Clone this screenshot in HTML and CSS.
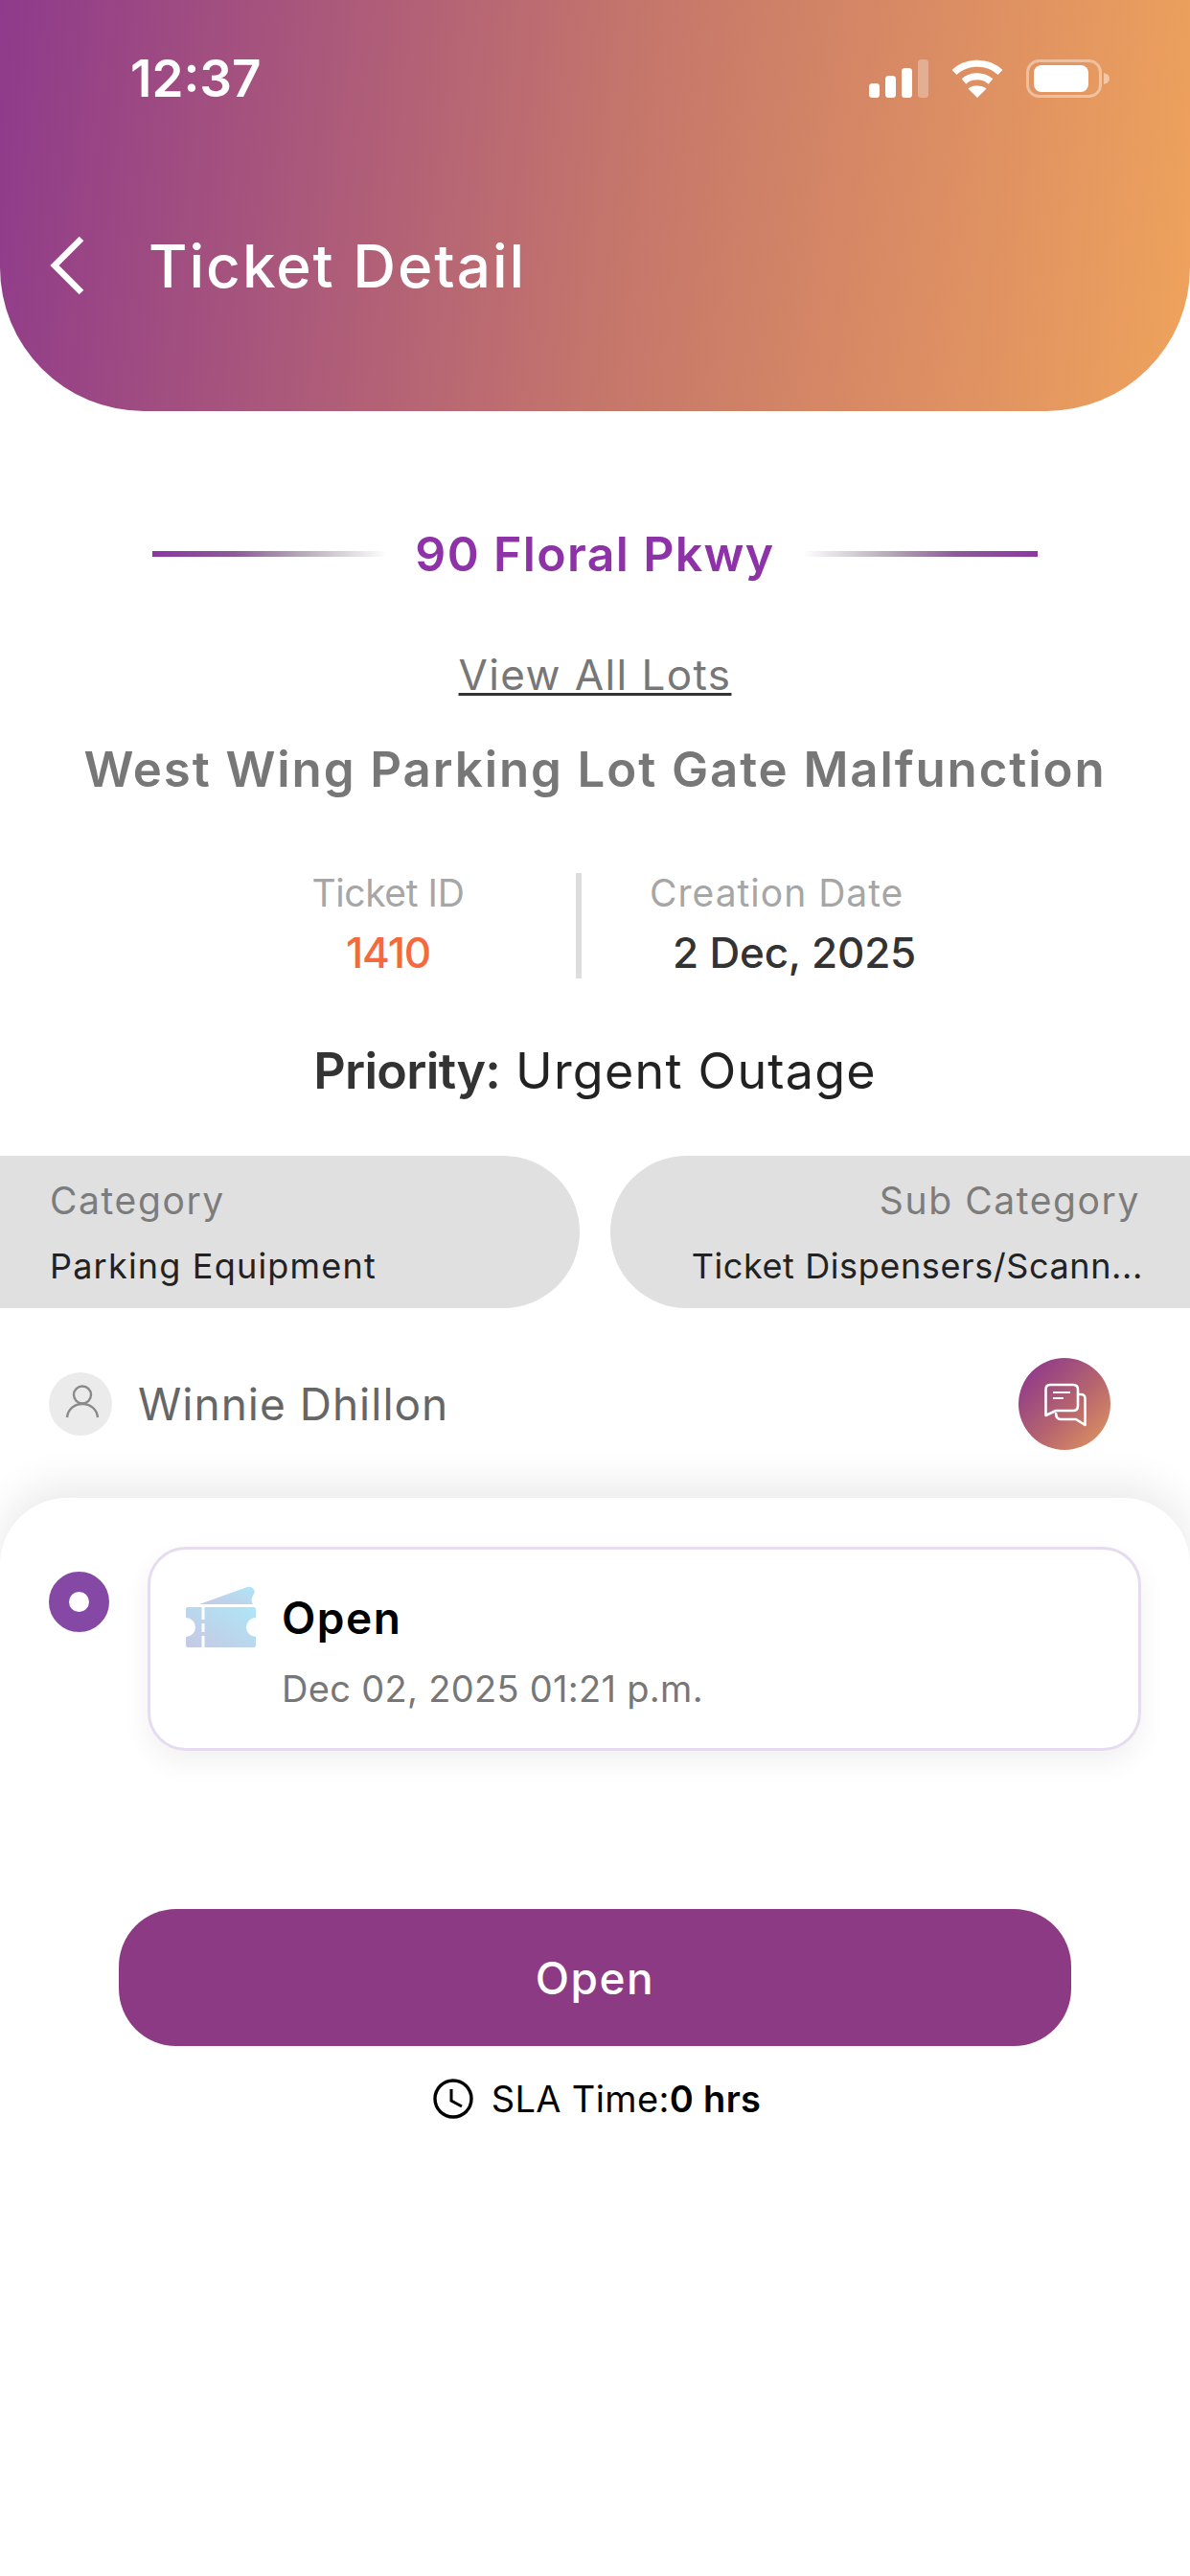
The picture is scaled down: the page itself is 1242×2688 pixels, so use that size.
FILE: index.html
```html
<!DOCTYPE html>
<html lang="en">
<head>
    <meta charset="UTF-8">
    <meta name="viewport" content="width=device-width, initial-scale=1.0">
    <title>Ticket Detail</title>
    <link rel="stylesheet" href="styles.css">
</head>
<body>
    <div class="page">
        <header class="top-header">
            <div class="status-bar">
                <span class="status-time">12:37</span>
                <div class="status-icons">
                    <svg class="icon-signal" width="62" height="40" viewBox="0 0 62 40" fill="#fff">
                        <rect x="0" y="25" width="11" height="15" rx="3.5"/>
                        <rect x="17" y="17" width="11" height="23" rx="3.5"/>
                        <rect x="34" y="9" width="11" height="31" rx="3.5"/>
                        <rect x="51" y="0" width="11" height="40" rx="3.5" opacity="0.3"/>
                    </svg>
                    <svg class="icon-wifi" width="54" height="40" viewBox="0 0 54 40" fill="none" stroke="#fff" stroke-width="7">
                        <path d="M3 13.5 C16 1 38 1 51 13.5"/>
                        <path d="M13 23 C21 16 33 16 41 23"/>
                        <path d="M27 40 L17.5 30.5 C22 26.5 32 26.5 36.5 30.5 Z" fill="#fff" stroke="none"/>
                    </svg>
                    <svg class="icon-battery" width="88" height="40" viewBox="0 0 88 40" fill="none">
                        <rect x="1.5" y="1.5" width="76" height="37" rx="12" stroke="#fff" stroke-width="3" opacity="0.4"/>
                        <rect x="8" y="6" width="57" height="28" rx="8" fill="#fff"/>
                        <path d="M81 14 C85 15 87 17 87 20 C87 23 85 25 81 26 Z" fill="#fff" opacity="0.45"/>
                    </svg>
                </div>
            </div>
            <div class="title-row">
                <svg class="back-arrow" width="36" height="62" viewBox="0 0 36 62" fill="none" stroke="#fff" stroke-width="6.5">
                    <path d="M33 3 L5 31 L33 59"/>
                </svg>
                <h1>Ticket Detail</h1>
            </div>
        </header>

        <div class="site-row">
            <span class="site-line"></span>
            <span class="site-name">90 Floral Pkwy</span>
            <span class="site-line site-line-right"></span>
        </div>
        <a class="view-lots" href="#">View All Lots</a>
        <h2 class="ticket-title">West Wing Parking Lot Gate Malfunction</h2>

        <div class="meta-row">
            <div class="meta-id">
                <div class="meta-label">Ticket ID</div>
                <div class="meta-value id-value">1410</div>
            </div>
            <span class="meta-sep"></span>
            <div class="meta-date">
                <div class="meta-label date-label">Creation Date</div>
                <div class="meta-value date-value">2 Dec, 2025</div>
            </div>
        </div>

        <div class="priority"><strong>Priority:</strong> Urgent Outage</div>

        <div class="pills">
            <div class="pill pill-left">
                <div class="pill-label">Category</div>
                <div class="pill-value">Parking Equipment</div>
            </div>
            <div class="pill pill-right">
                <div class="pill-label">Sub Category</div>
                <div class="pill-value">Ticket Dispensers/Scann...</div>
            </div>
        </div>

        <div class="owner-row">
            <div class="owner">
                <span class="avatar">
                    <svg width="66" height="66" viewBox="0 0 66 66" fill="none" stroke="#8a8a8a" stroke-width="2.4">
                        <circle cx="35" cy="23.5" r="9"/>
                        <path d="M19 47 C20 38 27 33 35 33 C43 33 50 38 51 47"/>
                    </svg>
                </span>
                <span class="owner-name">Winnie Dhillon</span>
            </div>
            <span class="chat-btn">
                <svg width="96" height="96" viewBox="0 0 96 96" fill="none" stroke="#fff" stroke-width="2.6" stroke-linejoin="round">
                    <path d="M33 28 H57 Q62 28 62 33 V50 Q62 55 57 55 H39 L28.500 60 V33 Q28.500 28 33 28 Z"/>
                    <path d="M36 36 H54 M36 42 H47" stroke-width="2.2"/>
                    <path d="M63 38 H65 Q69.500 38 69.500 42.500 V70 L60 64 H44 Q39 64 39 57"/>
                </svg>
            </span>
        </div>

        <section class="sheet">
            <div class="timeline-item">
                <span class="timeline-dot"></span>
                <div class="status-card">
                    <svg class="ticket-icon" width="73" height="64" viewBox="0 0 73 64">
                        <defs>
                            <linearGradient id="ticketGrad" x1="0" y1="1" x2="1" y2="0">
                                <stop offset="0" stop-color="#c6c8e3"/>
                                <stop offset="1" stop-color="#aee6f7"/>
                            </linearGradient>
                        </defs>
                        <path fill="url(#ticketGrad)" d="M14 19 L64 1 Q70 0 72 6 L69 12 Q68 16 70 19 Z"/>
                        <path fill="url(#ticketGrad)" d="M2 22 H71 Q73 22 73 24 V33 A10 10 0 0 0 73 53 V62 Q73 64 71 64 H2 Q0 64 0 62 V53 A10 10 0 0 0 0 33 V24 Q0 22 2 22 Z"/>
                        <path stroke="#fff" stroke-width="3" d="M18 22 V35 M18 39 V48 M18 52 V64"/>
                    </svg>
                    <div class="card-text">
                        <div class="card-title">Open</div>
                        <div class="card-date">Dec 02, 2025 01:21 p.m.</div>
                    </div>
                </div>
            </div>

            <button class="status-btn">Open</button>

            <div class="sla-row">
                <svg width="42" height="42" viewBox="0 0 42 42" fill="none" stroke="#000" stroke-width="3.4">
                    <circle cx="21" cy="21" r="19"/>
                    <path d="M19 11 V23 L30 29" stroke-width="3"/>
                </svg>
                <span>SLA Time:<strong>0 hrs</strong></span>
            </div>
        </section>
    </div>
</body>
</html>
```

FILE: styles.css
```css
* {
    box-sizing: border-box;
}
html, body {
    margin: 0;
    padding: 0;
}
body {
    font-family: Inter, "Noto Sans", sans-serif;
    background-color: #fff;
}
.page {
    width: 1242px;
    height: 2688px;
    overflow: hidden;
    display: flex;
    flex-direction: column;
}

/* Header */
.top-header {
    height: 429px;
    padding-top: 42px;
    background: linear-gradient(97deg, #8f3a8b 0%, #c5766b 52%, #efa35c 100%);
    border-radius: 0 0 150px 150px;
    color: #fff;
}
.status-bar {
    height: 80px;
    padding: 0 83px 0 136px;
    display: flex;
    align-items: center;
    justify-content: space-between;
}
.status-time {
    font-size: 53px;
    font-weight: 600;
}
.status-icons {
    display: flex;
    align-items: center;
    gap: 24px;
}
.title-row {
    height: 80px;
    margin-top: 115px;
    padding-left: 52px;
    display: flex;
    align-items: center;
    gap: 67px;
}
.title-row h1 {
    margin: 0;
    font-size: 62px;
    font-weight: 500;
    letter-spacing: 2px;
}

/* Site name with fading lines */
.site-row {
    height: 70px;
    margin-top: 114px;
    padding: 0 159px;
    display: flex;
    align-items: center;
    justify-content: space-between;
}
.site-line {
    width: 245px;
    height: 6px;
    background: linear-gradient(90deg, #8d37a3, #8c5a98 35%, #b8aeba 65%, rgba(210, 210, 210, 0));
}
.site-line-right {
    transform: scaleX(-1);
}
.site-name {
    font-size: 50px;
    font-weight: 600;
    letter-spacing: 1.35px;
    color: #8e32a8;
}
.view-lots {
    display: block;
    width: fit-content;
    height: 60px;
    margin: 61px auto 0;
    font-size: 44px;
    line-height: 60px;
    color: #777;
    letter-spacing: 1.4px;
    text-decoration: underline;
    text-decoration-color: #333;
    text-decoration-thickness: 3px;
    text-underline-offset: 3px;
}
.ticket-title {
    height: 70px;
    margin: 34px 0 0;
    font-size: 51px;
    line-height: 70px;
    font-weight: 600;
    letter-spacing: 1.9px;
    text-align: center;
    color: #777;
}

/* Ticket id and date */
.meta-row {
    height: 117px;
    margin-top: 69px;
    padding-left: 209px;
    display: grid;
    grid-template-columns: 392px 6px 1fr;
    align-items: center;
}
.meta-label {
    height: 50px;
    font-size: 39px;
    line-height: 50px;
    letter-spacing: -0.4px;
    color: #a6a6a6;
}
.date-label {
    letter-spacing: 1px;
}
.meta-value {
    height: 60px;
    margin-top: 7px;
    font-size: 44px;
    line-height: 60px;
    font-weight: 500;
}
.meta-id {
    text-align: center;
}
.id-value {
    letter-spacing: -1.2px;
    color: #f4693e;
}
.meta-sep {
    height: 110px;
    background-color: #ddd;
}
.meta-date {
    padding-left: 71px;
}
.date-value {
    padding-left: 24px;
    letter-spacing: -0.2px;
    color: #333;
}
.priority {
    height: 70px;
    margin-top: 59px;
    font-size: 52px;
    line-height: 70px;
    letter-spacing: 1.2px;
    text-align: center;
    color: #222;
}
.priority strong {
    font-weight: 600;
    letter-spacing: -0.7px;
    color: #333;
}

/* Category pills */
.pills {
    height: 159px;
    margin-top: 53px;
    display: grid;
    grid-template-columns: 605px 605px;
    gap: 32px;
}
.pill {
    padding-top: 22px;
    background-color: #e0e0e0;
}
.pill-left {
    padding-left: 52px;
    border-radius: 0 80px 80px 0;
}
.pill-right {
    padding-right: 52px;
    border-radius: 80px 0 0 80px;
    text-align: right;
}
.pill-label {
    height: 50px;
    font-size: 39px;
    line-height: 50px;
    letter-spacing: 1.6px;
    color: #7c7c7c;
}
.pill-value {
    height: 46px;
    margin-top: 20px;
    font-size: 36px;
    line-height: 46px;
    letter-spacing: 1.2px;
    color: #222;
}
.pill-right .pill-value {
    margin-right: -3px;
    letter-spacing: 0.6px;
}

/* Owner row */
.owner-row {
    height: 95px;
    margin-top: 52px;
    padding: 0 83px 0 51px;
    display: flex;
    align-items: center;
    justify-content: space-between;
}
.owner {
    display: flex;
    align-items: center;
    gap: 27px;
}
.avatar {
    width: 66px;
    height: 66px;
    border-radius: 50%;
    background-color: #ebebeb;
}
.avatar svg, .chat-btn svg {
    display: block;
}
.owner-name {
    font-size: 46px;
    letter-spacing: 1px;
    color: #666;
}
.chat-btn {
    width: 96px;
    height: 96px;
    border-radius: 50%;
    background: linear-gradient(135deg, #8f3a8b 10%, #b5646f 55%, #e59a5e 100%);
}

/* Bottom sheet */
.sheet {
    flex: 1;
    margin-top: 51px;
    padding: 51px 51px 0 51px;
    background-color: #fff;
    border-radius: 70px 70px 0 0;
    box-shadow: 0 -12px 45px rgba(0, 0, 0, 0.09);
}
.timeline-item {
    display: flex;
    align-items: flex-start;
    gap: 40px;
}
.timeline-dot {
    flex: none;
    width: 63px;
    height: 63px;
    margin-top: 26px;
    border: 21px solid #8549a5;
    border-radius: 50%;
    background-color: #fff;
}
.status-card {
    flex: 1;
    height: 213px;
    padding: 38px 37px 0;
    display: flex;
    align-items: flex-start;
    gap: 27px;
    background-color: #fff;
    border: 3px solid #e6dcf0;
    border-radius: 40px;
    box-shadow: 0 12px 30px rgba(0, 0, 0, 0.06);
}
.ticket-icon {
    flex: none;
}
.card-text {
    margin-top: 3px;
}
.card-title {
    height: 60px;
    font-size: 46px;
    line-height: 60px;
    font-weight: 600;
    letter-spacing: 1.5px;
    color: #000;
}
.card-date {
    height: 50px;
    margin-top: 19px;
    font-size: 38px;
    line-height: 50px;
    letter-spacing: 0.3px;
    color: #777;
}
.status-btn {
    display: block;
    width: 994px;
    height: 143px;
    margin: 165px 0 0 73px;
    padding: 0;
    font-family: inherit;
    font-size: 46px;
    font-weight: 500;
    letter-spacing: 1.5px;
    color: #fff;
    background-color: #8b3a83;
    border: none;
    border-radius: 60px;
    cursor: pointer;
}
.sla-row {
    height: 50px;
    margin-top: 30px;
    padding-left: 4px;
    display: flex;
    align-items: center;
    justify-content: center;
    gap: 19px;
    font-size: 38px;
    letter-spacing: 0.35px;
    color: #000;
}
.sla-row strong {
    font-weight: 600;
}
```
